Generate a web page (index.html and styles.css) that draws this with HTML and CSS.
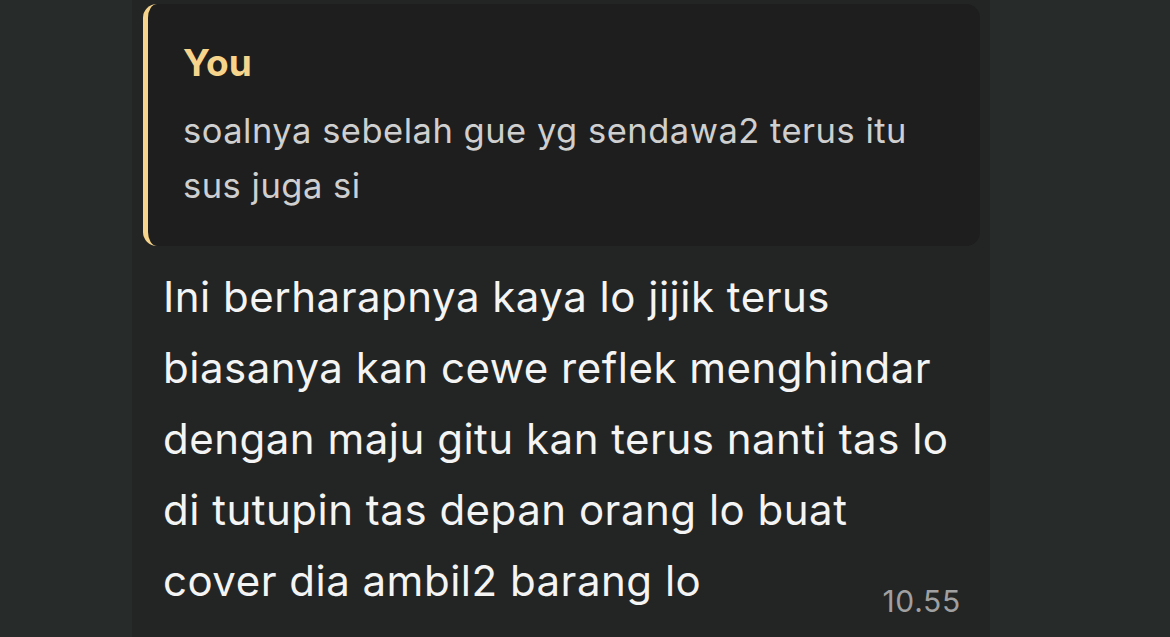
FILE: index.html
```html
<!DOCTYPE html>
<html>
<head>
<meta charset="utf-8">
<link rel="stylesheet" href="styles.css">
</head>
<body>
<div class="chat">
  <div class="bubble">
    <div class="quote">
      <div class="quote-author">You</div>
      <div class="quote-text">soalnya sebelah gue yg sendawa2 terus itu sus juga si</div>
    </div>
    <div class="message">
      <p class="message-text"><span class="body-text">Ini berharapnya kaya lo jijik terus biasanya kan cewe reflek menghindar dengan maju gitu kan terus nanti tas lo di tutupin tas depan orang lo buat cover dia ambil2 barang lo</span><span class="time">10.55</span></p>
    </div>
  </div>
</div>
</body>
</html>
```

FILE: styles.css
```css
html, body {
  margin: 0;
  padding: 0;
  height: 100%;
  background: #272b2a;
  overflow: hidden;
}
body {
  font-family: Inter, "Noto Sans", sans-serif;
}
.chat {
  display: flex;
  padding-left: 132px;
  height: 100%;
}
.bubble {
  width: 858px;
  background: #232524;
  margin-top: -20px;
  padding: 24px 10px 0 11px;
  border-radius: 0 22px 22px 22px;
  box-sizing: border-box;
  height: 680px;
}
.quote {
  background: #1e1e1e;
  border-left: 5px solid #f6d48c;
  border-radius: 14px;
  padding: 44px 30px 20px 35px;
  height: 242px;
  box-sizing: border-box;
}
.quote-author {
  color: #f6d48c;
  font-weight: 700;
  font-size: 37px;
  line-height: 40px;
  margin-top: -5px;
}
.quote-text {
  color: #cfcfcf;
  font-size: 34.5px;
  letter-spacing: 0.5px;
  line-height: 55px;
  margin-top: 20px;
  width: 740px;
}
.message {
  padding: 15px 20px 0 20px;
}
.message-text {
  margin: 0;
  width: 800px;
  font-size: 42px;
  line-height: 71px;
}
.body-text {
  color: #f4f4f4;
  letter-spacing: 0.5px;
}
.time {
  float: right;
  margin-top: 41px;
  margin-right: 2px;
  color: #a0a0a0;
  font-size: 30px;
  letter-spacing: 0.7px;
  line-height: 30px;
}
```
